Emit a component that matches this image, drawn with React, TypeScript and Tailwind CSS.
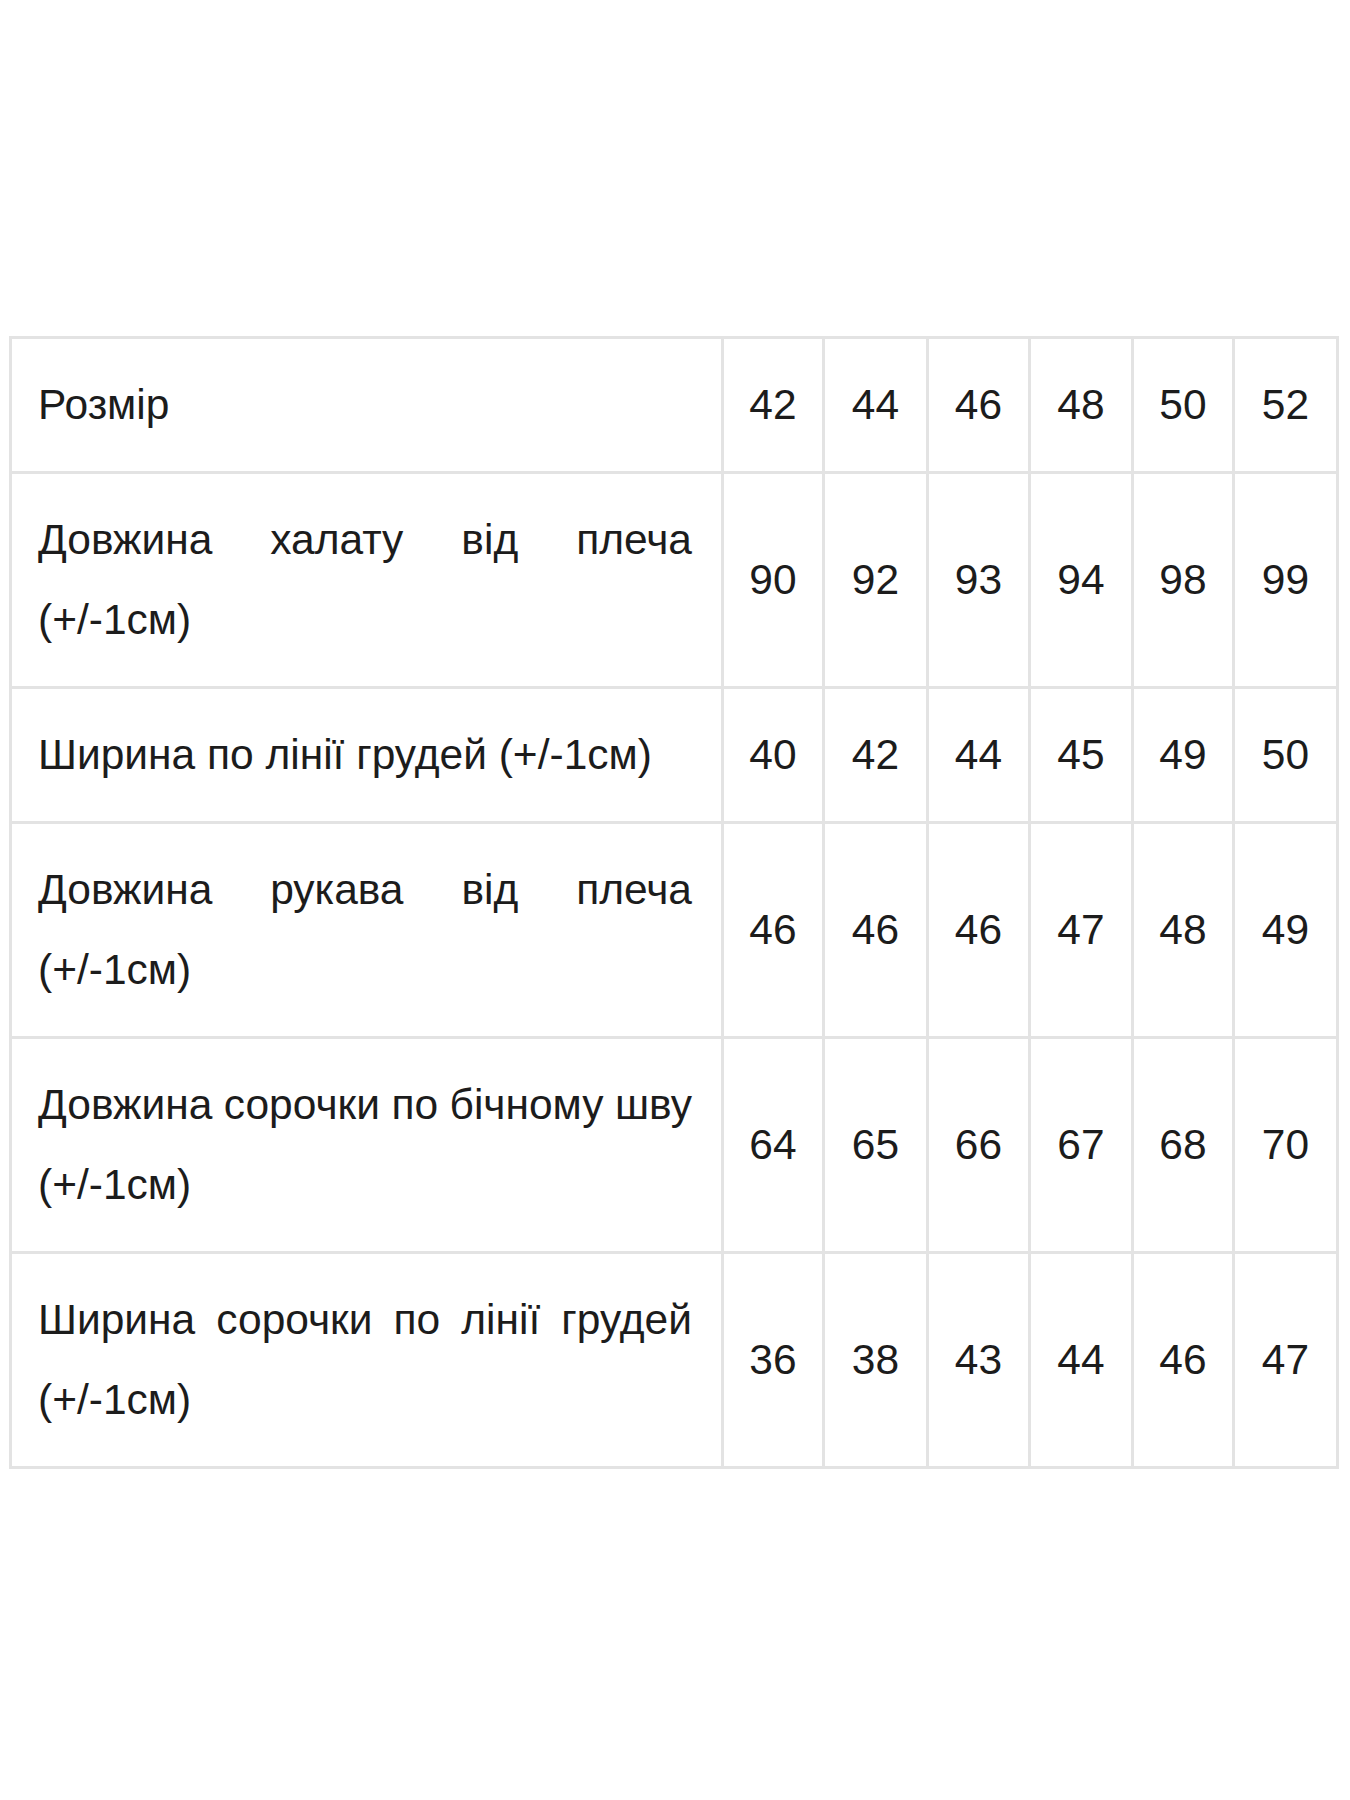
const sizes = ["42", "44", "46", "48", "50", "52"];

// tight: the original fits this label on one line before the tolerance note
const rows: { label: string; values: string[]; tight?: boolean }[] = [
  { label: "Довжина халату від плеча (+/-1см)", values: ["90", "92", "93", "94", "98", "99"] },
  { label: "Ширина по лінії грудей (+/-1см)", values: ["40", "42", "44", "45", "49", "50"] },
  { label: "Довжина рукава від плеча (+/-1см)", values: ["46", "46", "46", "47", "48", "49"] },
  { label: "Довжина сорочки по бічному шву (+/-1см)", values: ["64", "65", "66", "67", "68", "70"], tight: true },
  { label: "Ширина сорочки по лінії грудей (+/-1см)", values: ["36", "38", "43", "44", "46", "47"] },
];

const cell = "border-[3px] border-[#e3e3e3] align-middle";
const labelCell = `${cell} pl-[26px] pr-[29px] py-[26px] text-justify`;
const numCell = `${cell} text-center`;

export default function App() {
  return (
    <div className="min-h-[1800px] bg-white pt-[336px] pl-[9px] font-['Liberation_Sans',Arial,sans-serif] text-[42.5px] leading-[80px] text-[#1c1c1c]">
      <table className="w-[1327px] border-collapse table-fixed">
        <colgroup>
          <col className="w-[712px]" />
          <col className="w-[101px]" />
          <col className="w-[104px]" />
          <col className="w-[102px]" />
          <col className="w-[103px]" />
          <col className="w-[101px]" />
          <col className="w-[104px]" />
        </colgroup>
        <tbody>
          <tr>
            <td className={labelCell}>Розмір</td>
            {sizes.map((s) => (
              <td key={s} className={numCell}>{s}</td>
            ))}
          </tr>
          {rows.map((r) => (
            <tr key={r.label}>
              <td className={r.tight ? `${labelCell} [word-spacing:-10px]` : labelCell}>{r.label}</td>
              {r.values.map((v, i) => (
                <td key={i} className={numCell}>{v}</td>
              ))}
            </tr>
          ))}
        </tbody>
      </table>
    </div>
  );
}
